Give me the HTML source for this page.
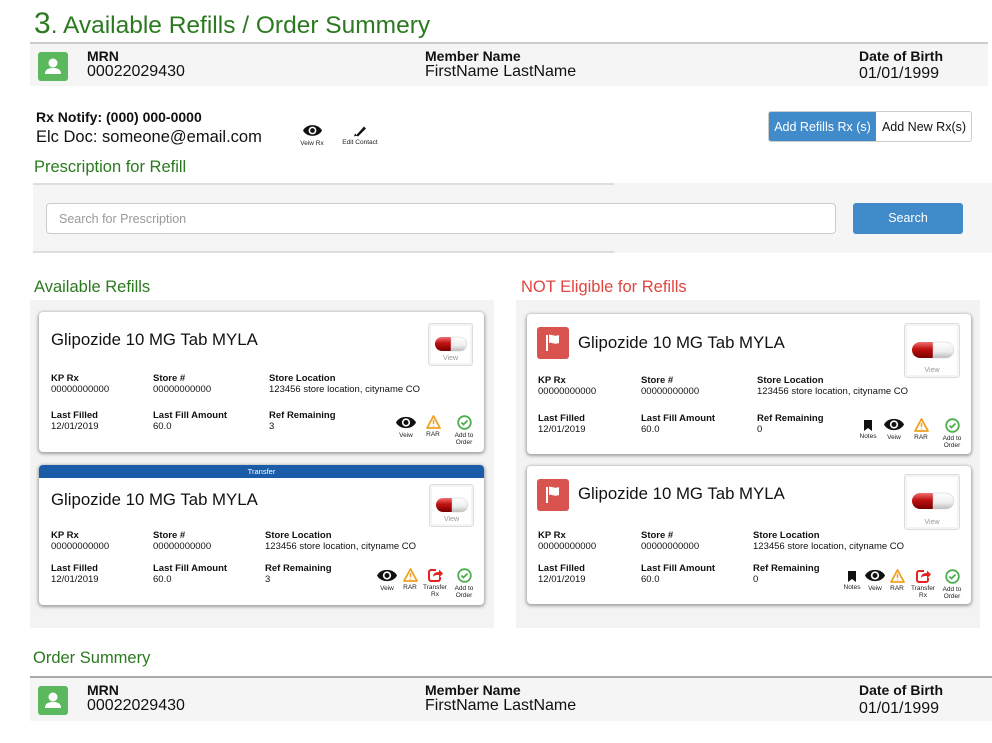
<!DOCTYPE html>
<html><head><meta charset="utf-8"><style>
*{box-sizing:border-box;margin:0;padding:0}
body{width:992px;height:743px;position:relative;background:#fff;font-family:"Liberation Sans",Arial,sans-serif;color:#111;overflow:hidden}
.a{position:absolute}
.green{color:#2b7a1f}
.bar{position:absolute;left:30px;width:958px;height:43px;background:#f5f5f5;border-top:2px solid #ccc}
.av{position:absolute;left:8px;top:8px;width:30px;height:29px;background:#5cb85c;border-radius:3px}
.lb{font-weight:bold;font-size:14px;line-height:14px}
.vl{font-size:16px;line-height:17px}
.card{position:absolute;background:#fff;border-radius:4px;box-shadow:0 1px 3px 1px rgba(0,0,0,.35)}
.t{position:absolute;font-size:16.8px;line-height:20px;white-space:nowrap}
.fl{position:absolute;font-size:9.5px;line-height:11px;white-space:nowrap}
.fl b{display:block}
.pill{position:absolute;border:1px solid #ddd;border-radius:3px;background:#fff;box-shadow:inset 0 0 0 2px #f4f4f4}
.pill span{position:absolute;bottom:3px;width:100%;text-align:center;font-size:7px;color:#999}
.ic{position:absolute;width:30px;text-align:center;font-size:6.5px;line-height:7px;color:#222}
.ic svg{display:block;margin:0 auto 2px}
.flag{position:absolute;width:32px;height:32px;background:#d9534f;border-radius:3px}
.sec{font-size:16.5px}
</style></head><body>

<div class="a green" style="left:34px;top:7px;font-size:24.5px;line-height:34px;white-space:nowrap"><span style="font-size:30px">3</span>. Available Refills / Order Summery</div>

<div class="bar" style="top:42px;height:44px">
 <div class="av"><svg width="30" height="29" viewBox="0 0 30 29"><circle cx="15" cy="11" r="4.5" fill="#fff"/><path d="M7 22c0-5 4-6 8-6s8 1 8 6z" fill="#fff"/></svg></div>
 <div class="a" style="left:57px;top:5px"><div class="lb">MRN</div><div class="vl">00022029430</div></div>
 <div class="a" style="left:395px;top:5px"><div class="lb">Member Name</div><div class="vl">FirstName LastName</div></div>
 <div class="a" style="left:829px;top:5px"><div class="lb">Date of Birth</div><div class="vl" style="margin-top:2px">01/01/1999</div></div>
</div>

<div class="a" style="left:36px;top:109px;font-size:14px;font-weight:bold">Rx Notify: (000) 000-0000</div>
<div class="a" style="left:36px;top:128px;font-size:16.5px">Elc Doc: someone@email.com</div>
<div class="ic" style="left:297px;top:123px"><svg width="19" height="15" viewBox="0 0 16 12"><path d="M0 6C3 0 13 0 16 6C13 12 3 12 0 6Z" fill="#111"/><circle cx="8" cy="6" r="3.3" fill="#fff"/><circle cx="8" cy="6" r="2" fill="#111"/></svg>Veiw Rx</div>
<div class="ic" style="left:339px;top:124px;width:42px"><svg width="14" height="13" viewBox="0 0 14 12"><path d="M3 11L11 2L13 4L5 12Z" fill="#111"/><path d="M1 12l1-3 2 2z" fill="#111"/></svg>Edit Contact</div>

<div class="a" style="left:768px;top:111px;width:204px;height:31px;border:1px solid #ccc;border-radius:3px;overflow:hidden;font-size:12.5px">
 <div class="a" style="left:0;top:0;width:107px;height:31px;background:#428bca;color:#fff;line-height:30px;text-align:center">Add Refills Rx (s)</div>
 <div class="a" style="left:107px;top:0;width:96px;height:31px;line-height:30px;text-align:center">Add New Rx(s)</div>
</div>

<div class="a green sec" style="left:34px;top:158px">Prescription for Refill</div>
<div class="a" style="left:33px;top:183px;width:959px;height:70px;background:#f5f5f5"></div>
<div class="a" style="left:33px;top:183px;width:581px;height:2px;background:#ddd"></div>
<div class="a" style="left:33px;top:251px;width:581px;height:2px;background:#ddd"></div>
<div class="a" style="left:46px;top:203px;width:790px;height:31px;background:#fff;border:1px solid #ccc;border-radius:4px;font-size:12.5px;color:#999;padding:8px 0 0 12px">Search for Prescription</div>
<div class="a" style="left:853px;top:203px;width:110px;height:31px;background:#428bca;border-radius:3px;color:#fff;font-size:12.5px;text-align:center;line-height:31px">Search</div>

<div class="a green sec" style="left:34px;top:278px">Available Refills</div>
<div class="a sec" style="left:521px;top:278px;color:#e0463f">NOT Eligible for Refills</div>

<div class="a" style="left:30px;top:300px;width:464px;height:328px;background:#f3f3f3"></div>
<div class="a" style="left:516px;top:300px;width:464px;height:328px;background:#f3f3f3"></div>

<svg width="0" height="0" style="position:absolute"><defs><linearGradient id="g1" x1="0" y1="0" x2="0" y2="1"><stop offset="0" stop-color="#f07070"/><stop offset=".45" stop-color="#c01010"/><stop offset="1" stop-color="#700"/></linearGradient><linearGradient id="gw" x1="0" y1="0" x2="0" y2="1"><stop offset="0" stop-color="#fff"/><stop offset=".6" stop-color="#eee"/><stop offset="1" stop-color="#bbb"/></linearGradient></defs></svg>

<!-- Left card 1 -->
<div class="card" style="left:39px;top:312px;width:445px;height:140px">
 <div class="t" style="left:12px;top:18px">Glipozide 10 MG Tab MYLA</div>
 <div class="pill" style="left:389px;top:11px;width:45px;height:43px"><svg class="a" style="left:5px;top:12px" width="34" height="16" viewBox="0 0 34 16"><path d="M8 1H17V15H8A7 7 0 0 1 8 1Z" fill="url(#g1)"/><path d="M17 1H26A7 7 0 0 1 26 15H17Z" fill="url(#gw)" stroke="#ccc" stroke-width=".5"/></svg><span>View</span></div>
 <div class="fl" style="left:12px;top:61px"><b>KP Rx</b>00000000000</div>
 <div class="fl" style="left:114px;top:61px"><b>Store #</b>00000000000</div>
 <div class="fl" style="left:230px;top:61px"><b>Store Location</b>123456 store location, cityname CO</div>
 <div class="fl" style="left:12px;top:98px"><b>Last Filled</b>12/01/2019</div>
 <div class="fl" style="left:114px;top:98px"><b>Last Fill Amount</b>60.0</div>
 <div class="fl" style="left:230px;top:98px"><b>Ref Remaining</b>3</div>
 <div class="ic" style="left:352px;top:103px"><svg width="20" height="15" viewBox="0 0 16 12"><path d="M0 6C3 0 13 0 16 6C13 12 3 12 0 6Z" fill="#111"/><circle cx="8" cy="6" r="3.3" fill="#fff"/><circle cx="8" cy="6" r="2" fill="#111"/></svg>Veiw</div>
 <div class="ic" style="left:379px;top:103px"><svg width="15" height="14" viewBox="0 0 15 14"><path d="M7.5 1L14 13H1Z" fill="none" stroke="#f0a020" stroke-width="1.8" stroke-linejoin="round"/><path d="M7.5 5v4M7.5 10.5v1" stroke="#f0a020" stroke-width="1.5"/></svg>RAR</div>
 <div class="ic" style="left:410px;top:103px"><svg width="15" height="15" viewBox="0 0 15 15"><circle cx="7.5" cy="7.5" r="6.3" fill="none" stroke="#4cae4c" stroke-width="1.8"/><path d="M4.5 7.5l2 2 4-4" fill="none" stroke="#4cae4c" stroke-width="1.8"/></svg>Add to Order</div>
</div>

<!-- Left card 2 transfer -->
<div class="card" style="left:39px;top:465px;width:445px;height:140px;overflow:hidden">
 <div class="a" style="left:0;top:0;width:445px;height:13px;background:#1a5ca8;color:#fff;font-size:7.5px;text-align:center;line-height:13px">Transfer</div>
 <div class="t" style="left:12px;top:25px">Glipozide 10 MG Tab MYLA</div>
 <div class="pill" style="left:390px;top:19px;width:45px;height:43px"><svg class="a" style="left:5px;top:12px" width="34" height="16" viewBox="0 0 34 16"><path d="M8 1H17V15H8A7 7 0 0 1 8 1Z" fill="url(#g1)"/><path d="M17 1H26A7 7 0 0 1 26 15H17Z" fill="url(#gw)" stroke="#ccc" stroke-width=".5"/></svg><span>View</span></div>
 <div class="fl" style="left:12px;top:65px"><b>KP Rx</b>00000000000</div>
 <div class="fl" style="left:114px;top:65px"><b>Store #</b>00000000000</div>
 <div class="fl" style="left:226px;top:65px"><b>Store Location</b>123456 store location, cityname CO</div>
 <div class="fl" style="left:12px;top:98px"><b>Last Filled</b>12/01/2019</div>
 <div class="fl" style="left:114px;top:98px"><b>Last Fill Amount</b>60.0</div>
 <div class="fl" style="left:226px;top:98px"><b>Ref Remaining</b>3</div>
 <div class="ic" style="left:333px;top:103px"><svg width="20" height="15" viewBox="0 0 16 12"><path d="M0 6C3 0 13 0 16 6C13 12 3 12 0 6Z" fill="#111"/><circle cx="8" cy="6" r="3.3" fill="#fff"/><circle cx="8" cy="6" r="2" fill="#111"/></svg>Veiw</div>
 <div class="ic" style="left:356px;top:103px"><svg width="15" height="14" viewBox="0 0 15 14"><path d="M7.5 1L14 13H1Z" fill="none" stroke="#f0a020" stroke-width="1.8" stroke-linejoin="round"/><path d="M7.5 5v4M7.5 10.5v1" stroke="#f0a020" stroke-width="1.5"/></svg>RAR</div>
 <div class="ic" style="left:381px;top:103px"><svg width="15" height="14" viewBox="0 0 15 14"><path d="M8 2H3A2 2 0 0 0 1 4V11A2 2 0 0 0 3 13H10A2 2 0 0 0 12 11V9" fill="none" stroke="#e82020" stroke-width="2"/><path d="M5 9C5 5 8 4 11 4V1.5L15 5.5L11 9.5V7C9 7 6 7 5 9Z" fill="#e82020"/></svg>Transfer Rx</div>
 <div class="ic" style="left:410px;top:103px"><svg width="15" height="15" viewBox="0 0 15 15"><circle cx="7.5" cy="7.5" r="6.3" fill="none" stroke="#4cae4c" stroke-width="1.8"/><path d="M4.5 7.5l2 2 4-4" fill="none" stroke="#4cae4c" stroke-width="1.8"/></svg>Add to Order</div>
</div>

<!-- Right card 1 -->
<div class="card" style="left:527px;top:314px;width:444px;height:140px">
 <div class="flag" style="left:10px;top:13px"><svg width="32" height="32" viewBox="0 0 32 32"><rect x="9" y="8" width="2" height="16" fill="#fff"/><path d="M12 8C15 7 17 10 22 8V16C17 18 15 15 12 16Z" fill="#fff"/></svg></div>
 <div class="t" style="left:51px;top:19px">Glipozide 10 MG Tab MYLA</div>
 <div class="pill" style="left:377px;top:9px;width:56px;height:55px"><svg class="a" style="left:6px;top:17px" width="44" height="18" viewBox="0 0 44 18"><path d="M9 1H22V17H9A8 8 0 0 1 9 1Z" fill="url(#g1)"/><path d="M22 1H35A8 8 0 0 1 35 17H22Z" fill="url(#gw)" stroke="#ccc" stroke-width=".5"/></svg><span>View</span></div>
 <div class="fl" style="left:11px;top:61px"><b>KP Rx</b>00000000000</div>
 <div class="fl" style="left:114px;top:61px"><b>Store #</b>00000000000</div>
 <div class="fl" style="left:230px;top:61px"><b>Store Location</b>123456 store location, cityname CO</div>
 <div class="fl" style="left:11px;top:99px"><b>Last Filled</b>12/01/2019</div>
 <div class="fl" style="left:114px;top:99px"><b>Last Fill Amount</b>60.0</div>
 <div class="fl" style="left:230px;top:99px"><b>Ref Remaining</b>0</div>
 <div class="ic" style="left:326px;top:106px"><svg width="8" height="11" viewBox="0 0 8 11"><path d="M0 0H8V11L4 8L0 11Z" fill="#111"/></svg>Notes</div>
 <div class="ic" style="left:352px;top:103px"><svg width="20" height="15" viewBox="0 0 16 12"><path d="M0 6C3 0 13 0 16 6C13 12 3 12 0 6Z" fill="#111"/><circle cx="8" cy="6" r="3.3" fill="#fff"/><circle cx="8" cy="6" r="2" fill="#111"/></svg>Veiw</div>
 <div class="ic" style="left:379px;top:104px"><svg width="15" height="14" viewBox="0 0 15 14"><path d="M7.5 1L14 13H1Z" fill="none" stroke="#f0a020" stroke-width="1.8" stroke-linejoin="round"/><path d="M7.5 5v4M7.5 10.5v1" stroke="#f0a020" stroke-width="1.5"/></svg>RAR</div>
 <div class="ic" style="left:410px;top:104px"><svg width="15" height="15" viewBox="0 0 15 15"><circle cx="7.5" cy="7.5" r="6.3" fill="none" stroke="#4cae4c" stroke-width="1.8"/><path d="M4.5 7.5l2 2 4-4" fill="none" stroke="#4cae4c" stroke-width="1.8"/></svg>Add to Order</div>
</div>

<!-- Right card 2 -->
<div class="card" style="left:527px;top:466px;width:444px;height:138px">
 <div class="flag" style="left:10px;top:13px"><svg width="32" height="32" viewBox="0 0 32 32"><rect x="9" y="8" width="2" height="16" fill="#fff"/><path d="M12 8C15 7 17 10 22 8V16C17 18 15 15 12 16Z" fill="#fff"/></svg></div>
 <div class="t" style="left:51px;top:18px">Glipozide 10 MG Tab MYLA</div>
 <div class="pill" style="left:377px;top:8px;width:56px;height:56px"><svg class="a" style="left:6px;top:17px" width="44" height="18" viewBox="0 0 44 18"><path d="M9 1H22V17H9A8 8 0 0 1 9 1Z" fill="url(#g1)"/><path d="M22 1H35A8 8 0 0 1 35 17H22Z" fill="url(#gw)" stroke="#ccc" stroke-width=".5"/></svg><span>View</span></div>
 <div class="fl" style="left:11px;top:64px"><b>KP Rx</b>00000000000</div>
 <div class="fl" style="left:114px;top:64px"><b>Store #</b>00000000000</div>
 <div class="fl" style="left:226px;top:64px"><b>Store Location</b>123456 store location, cityname CO</div>
 <div class="fl" style="left:11px;top:97px"><b>Last Filled</b>12/01/2019</div>
 <div class="fl" style="left:114px;top:97px"><b>Last Fill Amount</b>60.0</div>
 <div class="fl" style="left:226px;top:97px"><b>Ref Remaining</b>0</div>
 <div class="ic" style="left:310px;top:105px"><svg width="8" height="11" viewBox="0 0 8 11"><path d="M0 0H8V11L4 8L0 11Z" fill="#111"/></svg>Notes</div>
 <div class="ic" style="left:333px;top:102px"><svg width="20" height="15" viewBox="0 0 16 12"><path d="M0 6C3 0 13 0 16 6C13 12 3 12 0 6Z" fill="#111"/><circle cx="8" cy="6" r="3.3" fill="#fff"/><circle cx="8" cy="6" r="2" fill="#111"/></svg>Veiw</div>
 <div class="ic" style="left:355px;top:103px"><svg width="15" height="14" viewBox="0 0 15 14"><path d="M7.5 1L14 13H1Z" fill="none" stroke="#f0a020" stroke-width="1.8" stroke-linejoin="round"/><path d="M7.5 5v4M7.5 10.5v1" stroke="#f0a020" stroke-width="1.5"/></svg>RAR</div>
 <div class="ic" style="left:381px;top:103px"><svg width="15" height="14" viewBox="0 0 15 14"><path d="M8 2H3A2 2 0 0 0 1 4V11A2 2 0 0 0 3 13H10A2 2 0 0 0 12 11V9" fill="none" stroke="#e82020" stroke-width="2"/><path d="M5 9C5 5 8 4 11 4V1.5L15 5.5L11 9.5V7C9 7 6 7 5 9Z" fill="#e82020"/></svg>Transfer Rx</div>
 <div class="ic" style="left:410px;top:103px"><svg width="15" height="15" viewBox="0 0 15 15"><circle cx="7.5" cy="7.5" r="6.3" fill="none" stroke="#4cae4c" stroke-width="1.8"/><path d="M4.5 7.5l2 2 4-4" fill="none" stroke="#4cae4c" stroke-width="1.8"/></svg>Add to Order</div>
</div>

<div class="a green sec" style="left:33px;top:649px">Order Summery</div>
<div class="bar" style="top:676px;height:45px;border-top-color:#aaa;width:962px">
 <div class="av"><svg width="30" height="29" viewBox="0 0 30 29"><circle cx="15" cy="11" r="4.5" fill="#fff"/><path d="M7 22c0-5 4-6 8-6s8 1 8 6z" fill="#fff"/></svg></div>
 <div class="a" style="left:57px;top:5px"><div class="lb">MRN</div><div class="vl">00022029430</div></div>
 <div class="a" style="left:395px;top:5px"><div class="lb">Member Name</div><div class="vl">FirstName LastName</div></div>
 <div class="a" style="left:829px;top:5px"><div class="lb">Date of Birth</div><div class="vl" style="margin-top:3px">01/01/1999</div></div>
</div>

</body></html>
